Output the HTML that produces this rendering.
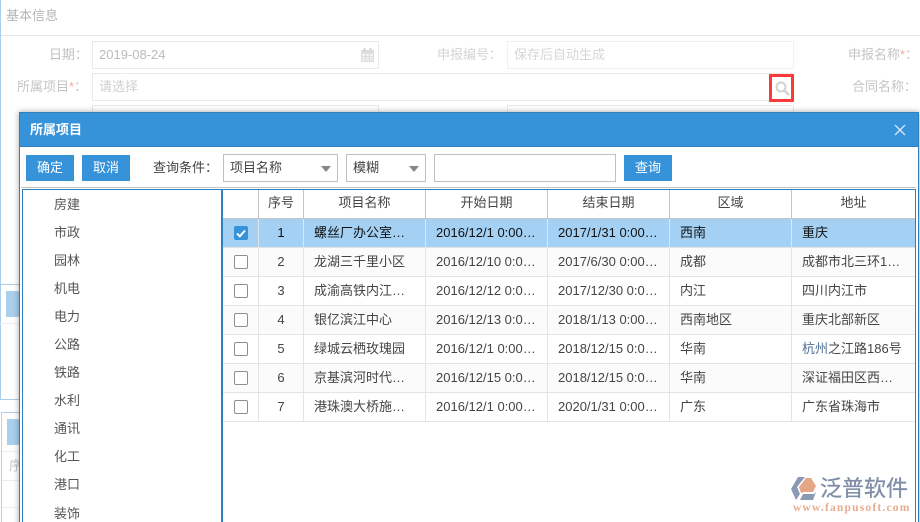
<!DOCTYPE html>
<html lang="zh-CN"><head><meta charset="utf-8"><title>所属项目</title>
<style>
*{box-sizing:border-box;margin:0;padding:0}
html,body{width:920px;height:522px;overflow:hidden;background:#fff}
body{position:relative;font:13px/16px "Liberation Sans","Noto Sans CJK SC",sans-serif;color:#444}
.a{position:absolute}
.t{position:absolute;white-space:nowrap;line-height:18px}
.g{color:#bdbdbd}
.ib{position:absolute;border:1px solid #eaeaea;background:#fff}
.r{text-align:right}
.btn{position:absolute;background:#3793d9;color:#fff;text-align:center;height:26px;line-height:26px;top:155px;width:48px;font-size:13px}
.sel{position:absolute;top:154px;height:28px;border:1px solid #c0c0c0;background:#fff;padding-left:6px;line-height:26px;color:#444}
.sel i{position:absolute;right:6px;top:11px;width:0;height:0;border:5px solid transparent;border-top:6px solid #888;border-bottom:0}
.li{position:absolute;left:54px;line-height:18px;color:#555}
.cell{position:absolute;white-space:nowrap;overflow:hidden;line-height:28px;height:28px}
.hl{position:absolute;left:223px;width:692px;height:1px;background:#e4e4e4}
.vl{position:absolute;width:1px;background:#e4e4e4}
.cb{position:absolute;left:234px;width:14px;height:14px;border:1px solid #8e8e8e;border-radius:2px;background:#fff}
</style></head><body>
<!-- background page -->
<div class="a" style="left:0;top:0;width:1px;height:400px;background:#a9cdea"></div>
<div class="t" style="left:6px;top:7px;color:#b5b5b5">基本信息</div>
<div class="a" style="left:1px;top:35px;width:919px;height:1px;background:#e8e8e8"></div>
<div class="t g" style="left:49px;top:46px;color:#c0c0c0">日期：</div>
<div class="ib" style="left:92px;top:41px;width:287px;height:28px"></div>
<div class="t" style="left:99px;top:46px;color:#bbb">2019-08-24</div>
<svg class="a" style="left:361px;top:48px" width="13" height="14" viewBox="0 0 13 14"><path d="M0.5 2.5h12v11H0.5z" fill="#f2f2f2" stroke="#dcdcdc"/><path d="M0.5 2.5h12v3H0.5z" fill="#dcdcdc"/><path d="M3.5 0v3M9.5 0v3" stroke="#d6d6d6" stroke-width="2"/><path d="M4.5 5v8M8.5 5v8M1 8.5h11M1 11h11" stroke="#dedede"/></svg>
<div class="t" style="left:437px;top:46px;color:#d4d4d4">申报编号：</div>
<div class="ib" style="left:507px;top:41px;width:287px;height:28px;border-color:#f1f1f1"></div>
<div class="t" style="left:514px;top:46px;color:#d6d6d6">保存后自动生成</div>
<div class="t" style="left:848px;top:46px;color:#c4c4c4">申报名称<span style="color:#f6a6a6">*</span>：</div>
<div class="t" style="left:17px;top:78px;color:#c4c4c4">所属项目<span style="color:#f6a6a6">*</span>：</div>
<div class="ib" style="left:92px;top:73px;width:702px;height:28px"></div>
<div class="t" style="left:99px;top:78px;color:#cfcfcf">请选择</div>
<div class="a" style="left:769px;top:74px;width:25px;height:28px;border:3px solid #fb3a3a;background:#fff"></div>
<svg class="a" style="left:775px;top:81px" width="15" height="15" viewBox="0 0 15 15"><circle cx="6" cy="6" r="4.5" fill="none" stroke="#d2d2d2" stroke-width="2"/><path d="M9.5 9.5l4.5 4.5" stroke="#d2d2d2" stroke-width="2.6"/></svg>
<div class="t" style="left:852px;top:78px;color:#c4c4c4">合同名称：</div>
<div class="ib" style="left:92px;top:105px;width:287px;height:20px"></div>
<div class="ib" style="left:507px;top:105px;width:287px;height:20px"></div>
<div class="a" style="left:0;top:284px;width:20px;height:1px;background:#a9cdea"></div>
<div class="a" style="left:6px;top:291px;width:14px;height:26px;background:#aacfec"></div>
<div class="a" style="left:0;top:323px;width:20px;height:1px;background:#eee"></div>
<div class="a" style="left:0;top:399px;width:20px;height:1px;background:#a9cdea"></div>
<div class="a" style="left:1px;top:412px;width:19px;height:1px;background:#a9cdea"></div>
<div class="a" style="left:1px;top:412px;width:1px;height:110px;background:#b5d2e8"></div>
<div class="a" style="left:7px;top:419px;width:13px;height:26px;background:#aacfec"></div>
<div class="a" style="left:2px;top:451px;width:18px;height:1px;background:#eee"></div>
<div class="a" style="left:2px;top:480px;width:18px;height:1px;background:#eee"></div>
<div class="a" style="left:2px;top:507px;width:18px;height:1px;background:#eee"></div>
<div class="t" style="left:9px;top:457px;color:#c4c4c4;width:10px;overflow:hidden">序</div>

<!-- modal -->
<div class="a" style="left:19px;top:112px;width:900px;height:420px;background:#fff;border:1px solid #2f80bd;box-shadow:0 0 6px rgba(0,0,0,.35)"></div>
<div class="a" style="left:20px;top:113px;width:898px;height:34px;background:#3793d9;border-bottom:1px solid #2f80bd"></div>
<div class="t" style="left:30px;top:121px;color:#fff;font-weight:bold">所属项目</div>
<svg class="a" style="left:894px;top:124px" width="12" height="12" viewBox="0 0 12 12"><path d="M1 1l10 10M11 1L1 11" stroke="#d3e6f5" stroke-width="1.4"/></svg>
<div class="btn" style="left:26px">确定</div>
<div class="btn" style="left:82px">取消</div>
<div class="t" style="left:153px;top:159px;color:#444">查询条件：</div>
<div class="sel" style="left:223px;width:115px">项目名称<i></i></div>
<div class="sel" style="left:346px;width:80px">模糊<i></i></div>
<div class="sel" style="left:434px;width:182px"></div>
<div class="btn" style="left:624px">查询</div>
<div class="a" style="left:21px;top:187px;width:895px;height:1px;background:#c4c4c4"></div>

<!-- left tree -->
<div class="a" style="left:22px;top:189px;width:894px;height:340px;border:1px solid #2f80bd;border-width:1px 1px 0 1px"></div>
<div class="a" style="left:221px;top:189px;width:2px;height:333px;background:#2f80bd"></div>
<div class="li" style="top:196px">房建</div>
<div class="li" style="top:224px">市政</div>
<div class="li" style="top:252px">园林</div>
<div class="li" style="top:280px">机电</div>
<div class="li" style="top:308px">电力</div>
<div class="li" style="top:336px">公路</div>
<div class="li" style="top:364px">铁路</div>
<div class="li" style="top:392px">水利</div>
<div class="li" style="top:420px">通讯</div>
<div class="li" style="top:448px">化工</div>
<div class="li" style="top:476px">港口</div>
<div class="li" style="top:505px">装饰</div>

<!-- grid backgrounds -->
<div class="a" style="left:223px;top:218px;width:692px;height:1px;background:#c4c4c4"></div>
<div class="a" style="left:223px;top:219px;width:692px;height:28px;background:#a3d0f3"></div>
<div class="a" style="left:223px;top:248px;width:692px;height:28px;background:#fbfbfb"></div>
<div class="a" style="left:223px;top:306px;width:692px;height:28px;background:#fbfbfb"></div>
<div class="a" style="left:223px;top:364px;width:692px;height:28px;background:#fbfbfb"></div>
<div class="hl" style="top:247px"></div><div class="hl" style="top:276px"></div><div class="hl" style="top:305px"></div><div class="hl" style="top:334px"></div><div class="hl" style="top:363px"></div><div class="hl" style="top:392px"></div><div class="hl" style="top:421px"></div>
<div class="vl" style="left:258px;top:190px;height:28px;background:#c4c4c4"></div>
<div class="vl" style="left:303px;top:190px;height:28px;background:#c4c4c4"></div>
<div class="vl" style="left:425px;top:190px;height:28px;background:#c4c4c4"></div>
<div class="vl" style="left:547px;top:190px;height:28px;background:#c4c4c4"></div>
<div class="vl" style="left:669px;top:190px;height:28px;background:#c4c4c4"></div>
<div class="vl" style="left:791px;top:190px;height:28px;background:#c4c4c4"></div>
<div class="vl" style="left:258px;top:219px;height:202px"></div>
<div class="vl" style="left:303px;top:219px;height:202px"></div>
<div class="vl" style="left:425px;top:219px;height:202px"></div>
<div class="vl" style="left:547px;top:219px;height:202px"></div>
<div class="vl" style="left:669px;top:219px;height:202px"></div>
<div class="vl" style="left:791px;top:219px;height:202px"></div>

<!-- header -->
<div class="cell" style="left:259px;top:189px;width:44px;text-align:center">序号</div>
<div class="cell" style="left:304px;top:189px;width:121px;text-align:center">项目名称</div>
<div class="cell" style="left:426px;top:189px;width:121px;text-align:center">开始日期</div>
<div class="cell" style="left:548px;top:189px;width:121px;text-align:center">结束日期</div>
<div class="cell" style="left:670px;top:189px;width:121px;text-align:center">区域</div>
<div class="cell" style="left:792px;top:189px;width:123px;text-align:center">地址</div>

<!-- checkboxes -->
<div class="cb" style="top:226px;background:#3793d9;border-color:#3793d9"></div>
<svg class="a" style="left:236px;top:229px" width="10" height="9" viewBox="0 0 10 9"><path d="M1 4.5l2.8 2.8L9 1.5" fill="none" stroke="#fff" stroke-width="2"/></svg>
<div class="cb" style="top:255px"></div><div class="cb" style="top:284px"></div><div class="cb" style="top:313px"></div><div class="cb" style="top:342px"></div><div class="cb" style="top:371px"></div><div class="cb" style="top:400px"></div>

<!-- row 1 -->
<div style="color:#111">
<div class="cell" style="left:259px;top:219px;width:44px;text-align:center">1</div>
<div class="cell" style="left:314px;top:219px;width:104px">螺丝厂办公室…</div>
<div class="cell" style="left:436px;top:219px;width:106px">2016/12/1 0:00…</div>
<div class="cell" style="left:558px;top:219px;width:106px">2017/1/31 0:00…</div>
<div class="cell" style="left:680px;top:219px;width:100px">西南</div>
<div class="cell" style="left:802px;top:219px;width:106px">重庆</div>
</div>
<!-- row 2 -->
<div class="cell" style="left:259px;top:248px;width:44px;text-align:center">2</div>
<div class="cell" style="left:314px;top:248px;width:104px">龙湖三千里小区</div>
<div class="cell" style="left:436px;top:248px;width:106px">2016/12/10 0:0…</div>
<div class="cell" style="left:558px;top:248px;width:106px">2017/6/30 0:00…</div>
<div class="cell" style="left:680px;top:248px;width:100px">成都</div>
<div class="cell" style="left:802px;top:248px;width:106px">成都市北三环1…</div>
<!-- row 3 -->
<div class="cell" style="left:259px;top:277px;width:44px;text-align:center">3</div>
<div class="cell" style="left:314px;top:277px;width:104px">成渝高铁内江…</div>
<div class="cell" style="left:436px;top:277px;width:106px">2016/12/12 0:0…</div>
<div class="cell" style="left:558px;top:277px;width:106px">2017/12/30 0:0…</div>
<div class="cell" style="left:680px;top:277px;width:100px">内江</div>
<div class="cell" style="left:802px;top:277px;width:106px">四川内江市</div>
<!-- row 4 -->
<div class="cell" style="left:259px;top:306px;width:44px;text-align:center">4</div>
<div class="cell" style="left:314px;top:306px;width:104px">银亿滨江中心</div>
<div class="cell" style="left:436px;top:306px;width:106px">2016/12/13 0:0…</div>
<div class="cell" style="left:558px;top:306px;width:106px">2018/1/13 0:00…</div>
<div class="cell" style="left:680px;top:306px;width:100px">西南地区</div>
<div class="cell" style="left:802px;top:306px;width:106px">重庆北部新区</div>
<!-- row 5 -->
<div class="cell" style="left:259px;top:335px;width:44px;text-align:center">5</div>
<div class="cell" style="left:314px;top:335px;width:104px">绿城云栖玫瑰园</div>
<div class="cell" style="left:436px;top:335px;width:106px">2016/12/1 0:00…</div>
<div class="cell" style="left:558px;top:335px;width:106px">2018/12/15 0:0…</div>
<div class="cell" style="left:680px;top:335px;width:100px">华南</div>
<div class="cell" style="left:802px;top:335px;width:110px"><span style="color:#4d6f96">杭州</span>之江路186号</div>
<!-- row 6 -->
<div class="cell" style="left:259px;top:364px;width:44px;text-align:center">6</div>
<div class="cell" style="left:314px;top:364px;width:104px">京基滨河时代…</div>
<div class="cell" style="left:436px;top:364px;width:106px">2016/12/15 0:0…</div>
<div class="cell" style="left:558px;top:364px;width:106px">2018/12/15 0:0…</div>
<div class="cell" style="left:680px;top:364px;width:100px">华南</div>
<div class="cell" style="left:802px;top:364px;width:106px">深证福田区西…</div>
<!-- row 7 -->
<div class="cell" style="left:259px;top:393px;width:44px;text-align:center">7</div>
<div class="cell" style="left:314px;top:393px;width:104px">港珠澳大桥施…</div>
<div class="cell" style="left:436px;top:393px;width:106px">2016/12/1 0:00…</div>
<div class="cell" style="left:558px;top:393px;width:106px">2020/1/31 0:00…</div>
<div class="cell" style="left:680px;top:393px;width:100px">广东</div>
<div class="cell" style="left:802px;top:393px;width:106px">广东省珠海市</div>

<!-- logo -->
<svg class="a" style="left:791px;top:477px" width="27" height="25" viewBox="0 0 27 25"><path d="M7 0h7L6 10l3 7-4 6L0 12z" fill="#8a9ab3"/><path d="M15 1h5l5 8-3 6h-9l-3 1-2-6z" fill="#e5a688"/><path d="M12 17h11l2-2-3 8H9z" fill="#8a9ab3"/></svg>
<div class="t" style="left:820px;top:476px;font-size:22px;line-height:26px;font-weight:normal;color:#7f8da8;-webkit-text-stroke:.3px #7f8da8">泛普软件</div>
<div class="t" style="left:793px;top:501px;font:bold 11.5px/14px 'Liberation Serif',serif;color:#e8ab8e;letter-spacing:1.2px">www.fanpusoft.com</div>
</body></html>
